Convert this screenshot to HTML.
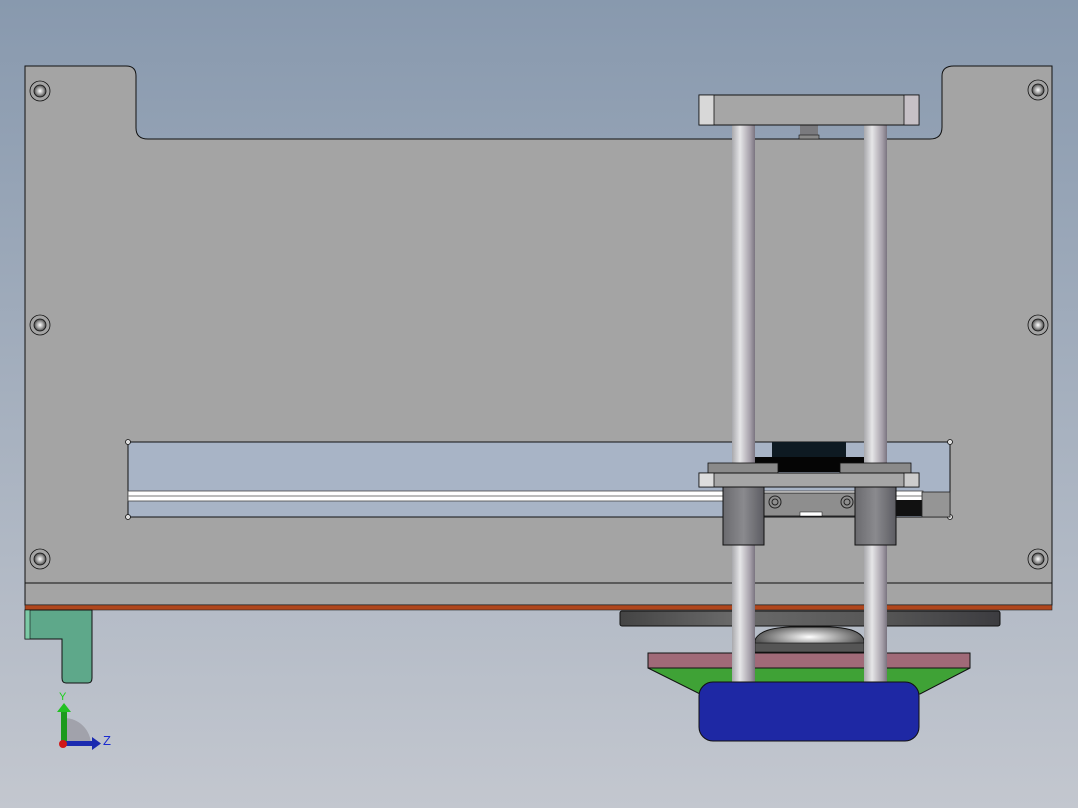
<!DOCTYPE html>
<html><head><style>body{margin:0}svg{display:block}</style></head><body>
<svg width="1078" height="808" viewBox="0 0 1078 808" xmlns="http://www.w3.org/2000/svg">
<defs>
<linearGradient id="bg" x1="0" y1="0" x2="0" y2="1"><stop offset="0" stop-color="#8899ae"/><stop offset="1" stop-color="#c3c7cf"/></linearGradient>
<linearGradient id="rod" x1="0" y1="0" x2="1" y2="0"><stop offset="0" stop-color="#a8a8ac"/><stop offset=".35" stop-color="#e6e6e8"/><stop offset=".8" stop-color="#a49ea8"/><stop offset="1" stop-color="#7a7480"/></linearGradient>
<linearGradient id="bush" x1="0" y1="0" x2="1" y2="0"><stop offset="0" stop-color="#6a6a6e"/><stop offset=".5" stop-color="#8a8a8e"/><stop offset="1" stop-color="#5c5c62"/></linearGradient>
<linearGradient id="wheel" x1="0" y1="0" x2="1" y2="0"><stop offset="0" stop-color="#444"/><stop offset=".3" stop-color="#6a6a6a"/><stop offset=".7" stop-color="#555"/><stop offset="1" stop-color="#3c3c40"/></linearGradient>
<radialGradient id="bowl" cx=".5" cy=".4" r=".5"><stop offset="0" stop-color="#fff"/><stop offset=".5" stop-color="#a8a8a8"/><stop offset="1" stop-color="#555"/></radialGradient>
<radialGradient id="scr" cx=".5" cy=".5" r=".5"><stop offset="0" stop-color="#fff"/><stop offset=".6" stop-color="#999"/><stop offset="1" stop-color="#444"/></radialGradient>
</defs>
<rect width="1078" height="808" fill="url(#bg)"/>
<!-- main plate -->
<path d="M25 66 H126 Q136 66 136 76 V128 Q136 139 148 139 H930 Q942 139 942 127 V76 Q942 66 954 66 H1052 V605 H25 Z" fill="#a4a4a4" stroke="#111" stroke-width="1"/>
<line x1="25" y1="583" x2="1052" y2="583" stroke="#111"/>
<rect x="25" y="605" width="1027" height="5" fill="#b0461c" stroke="#222" stroke-width=".6"/>
<!-- window -->
<rect x="128" y="442" width="822" height="75" fill="#a8b4c6" stroke="#111"/>
<circle cx="128" cy="442" r="2.5" fill="#ddd" stroke="#111" stroke-width=".8"/><circle cx="950" cy="442" r="2.5" fill="#ddd" stroke="#111" stroke-width=".8"/>
<circle cx="128" cy="517" r="2.5" fill="#ddd" stroke="#111" stroke-width=".8"/><circle cx="950" cy="517" r="2.5" fill="#ddd" stroke="#111" stroke-width=".8"/>
<rect x="128" y="491" width="795" height="10" fill="#fff" stroke="#444" stroke-width=".8"/>
<line x1="128" y1="496" x2="923" y2="496" stroke="#777" stroke-width="1"/>
<rect x="896" y="500" width="26" height="16" fill="#111"/>
<rect x="922" y="492" width="28" height="25" fill="#959595" stroke="#222" stroke-width=".8"/>
<!-- screws -->
<g fill="url(#scr)" stroke="#111" stroke-width=".8">
<circle cx="40" cy="91" r="10" fill="none"/><circle cx="40" cy="91" r="6"/>
<circle cx="40" cy="325" r="10" fill="none"/><circle cx="40" cy="325" r="6"/>
<circle cx="40" cy="559" r="10" fill="none"/><circle cx="40" cy="559" r="6"/>
<circle cx="1038" cy="90" r="10" fill="none"/><circle cx="1038" cy="90" r="6"/>
<circle cx="1038" cy="325" r="10" fill="none"/><circle cx="1038" cy="325" r="6"/>
<circle cx="1038" cy="559" r="10" fill="none"/><circle cx="1038" cy="559" r="6"/>
</g>
<!-- green bracket -->
<path d="M25 610 H92 V678 Q92 683 88 683 H66 Q62 683 62 678 V639 H25 Z" fill="#5ea88a" stroke="#111"/>
<rect x="25" y="610" width="5" height="29" fill="#7ccaa6" stroke="#111" stroke-width=".6"/>
<!-- wheel -->
<rect x="620" y="611" width="380" height="15" rx="2" fill="url(#wheel)" stroke="#111"/>
<path d="M755 652 V640 Q760 628 790 627 H830 Q860 628 864 640 V652 Z" fill="url(#bowl)" stroke="#111"/>
<rect x="755" y="643" width="109" height="9" fill="#555" stroke="#111" stroke-width=".6"/>
<rect x="648" y="653" width="322" height="15" fill="#a06a78" stroke="#111"/>
<path d="M648 668 H970 L920 694 H700 Z" fill="#3fa236" stroke="#111"/>
<!-- top screw -->
<rect x="800" y="125" width="18" height="10" fill="#7a7a7e"/>
<rect x="799" y="135" width="20" height="4" fill="#8a8a8a" stroke="#111" stroke-width=".6"/>
<!-- black block -->
<rect x="772" y="442" width="74" height="20" fill="#0e1a22"/>
<rect x="755" y="457" width="109" height="15" fill="#050505"/>
<!-- rods -->
<rect x="732" y="124" width="23" height="562" fill="url(#rod)"/>
<rect x="864" y="124" width="23" height="562" fill="url(#rod)"/>
<!-- top bar -->
<rect x="699" y="95" width="220" height="30" fill="#a6a6a6" stroke="#111"/>
<rect x="699" y="95" width="15" height="30" fill="#d8d8d8" stroke="#111" stroke-width=".8"/>
<rect x="904" y="95" width="15" height="30" fill="#c6c0c6" stroke="#111" stroke-width=".8"/>
<!-- carriage -->
<rect x="708" y="463" width="70" height="10" fill="#8a8a8a" stroke="#111" stroke-width=".8"/>
<rect x="840" y="463" width="71" height="10" fill="#8a8a8a" stroke="#111" stroke-width=".8"/>
<rect x="699" y="473" width="220" height="14" fill="#a6a6a6" stroke="#111"/>
<rect x="699" y="473" width="15" height="14" fill="#ddd" stroke="#111" stroke-width=".8"/>
<rect x="904" y="473" width="15" height="14" fill="#ccc" stroke="#111" stroke-width=".8"/>
<rect x="764" y="493" width="91" height="23" fill="#8e8e8e" stroke="#111" stroke-width=".8"/>
<rect x="800" y="512" width="22" height="4" fill="#fff" stroke="#111" stroke-width=".5"/>
<circle cx="775" cy="502" r="6" fill="none" stroke="#222"/><circle cx="775" cy="502" r="3" fill="none" stroke="#222"/>
<circle cx="847" cy="502" r="6" fill="none" stroke="#222"/><circle cx="847" cy="502" r="3" fill="none" stroke="#222"/>
<rect x="723" y="487" width="41" height="58" fill="url(#bush)" stroke="#111"/>
<rect x="855" y="487" width="41" height="58" fill="url(#bush)" stroke="#111"/>
<!-- blue -->
<rect x="699" y="682" width="220" height="59" rx="14" fill="#1e28a4" stroke="#111"/>
<!-- axis triad -->
<path d="M64 718 A27 27 0 0 1 91 745 H64 Z" fill="#9a9aa2" opacity=".8"/>
<rect x="61" y="710" width="6" height="35" fill="#1c9a1c"/>
<path d="M57 712 L64 703 L71 712 Z" fill="#22c022"/>
<rect x="64" y="741" width="28" height="5" fill="#1a2ab0"/>
<path d="M92 737 L101 743.5 L92 750 Z" fill="#1a2ab0"/>
<circle cx="63" cy="744" r="4" fill="#d01818"/>
<text x="59" y="700" font-family="Liberation Sans, sans-serif" font-size="11" fill="#18d018">Y</text>
<text x="103" y="745" font-family="Liberation Sans, sans-serif" font-size="13" fill="#1a2ad0">Z</text>
</svg>
</body></html>
